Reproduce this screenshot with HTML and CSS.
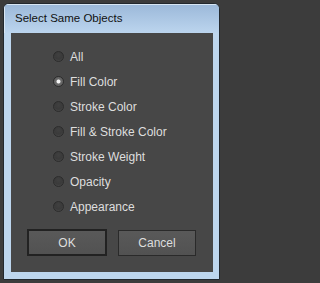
FILE: index.html
```html
<!DOCTYPE html>
<html>
<head>
<meta charset="utf-8">
<link rel="stylesheet" href="styles.css">
</head>
<body>
<div class="window">
  <div class="titlebar">Select Same Objects</div>
  <div class="content">
    <ul class="options">
      <li class="option"><span class="radio"></span><span class="label">All</span></li>
      <li class="option"><span class="radio checked"></span><span class="label">Fill Color</span></li>
      <li class="option"><span class="radio"></span><span class="label">Stroke Color</span></li>
      <li class="option"><span class="radio"></span><span class="label">Fill &amp; Stroke Color</span></li>
      <li class="option"><span class="radio"></span><span class="label">Stroke Weight</span></li>
      <li class="option"><span class="radio"></span><span class="label">Opacity</span></li>
      <li class="option"><span class="radio"></span><span class="label">Appearance</span></li>
    </ul>
    <div class="buttons">
      <div class="btn btn-default">OK</div>
      <div class="btn btn-cancel">Cancel</div>
    </div>
  </div>
</div>
</body>
</html>
```

FILE: styles.css
```css
html, body {
  margin: 0;
  padding: 0;
  background: #3c3c3c;
  width: 222px;
  height: 283px;
  overflow: hidden;
}
.window {
  box-sizing: border-box;
  margin: 3px 0 0 3px;
  width: 217px;
  height: 277px;
  border: 1px solid #22282e;
  border-radius: 6px 6px 0 0;
  background: #bdd6ee;
  display: flex;
  flex-direction: column;
  overflow: hidden;
}
.titlebar {
  height: 29px;
  flex: none;
  box-sizing: border-box;
  padding: 5px 0 0 11px;
  font-family: "Liberation Sans", Arial, sans-serif;
  font-size: 11.5px;
  line-height: 18px;
  color: #111;
  background: linear-gradient(#9bb8d9, #bcd5ee);
  box-shadow: inset 1px 1px 0 #d8e6f3;
}
.content {
  margin: 0 6px 7px 7px;
  flex: 1;
  background: #474747;
  display: flex;
  flex-direction: column;
}
.options {
  list-style: none;
  margin: 0;
  padding: 11px 0 0 42px;
}
.option {
  height: 25px;
  display: flex;
  align-items: center;
}
.radio {
  box-sizing: border-box;
  width: 11px;
  height: 11px;
  border-radius: 50%;
  border: 1px solid #2c2c2c;
  background: radial-gradient(circle at 50% 35%, #404040 0%, #3a3a3a 55%, #505050 100%);
  margin-right: 6px;
  position: relative;
}
.radio.checked {
  background: radial-gradient(circle at 50% 50%, #f4f4f4 0, #f4f4f4 1.6px, #6a6a6a 2.4px, #5a5a5a 100%);
}
.label {
  font-family: "Liberation Sans", Arial, sans-serif;
  font-size: 12px;
  color: #dedede;
  line-height: 14px;
}
.buttons {
  display: flex;
  align-items: flex-start;
  padding: 10px 0 0 16px;
  gap: 11px;
}
.btn {
  box-sizing: border-box;
  display: flex;
  align-items: center;
  justify-content: center;
  font-family: "Liberation Sans", Arial, sans-serif;
  font-size: 12px;
  color: #dedede;
  background: linear-gradient(#595959, #525252);
}
.btn-default {
  width: 80px;
  height: 27px;
  border: 2px solid #222;
}
.btn-cancel {
  margin-top: 1px;
  width: 78px;
  height: 26px;
  border: 1px solid #2a2a2a;
}
```
